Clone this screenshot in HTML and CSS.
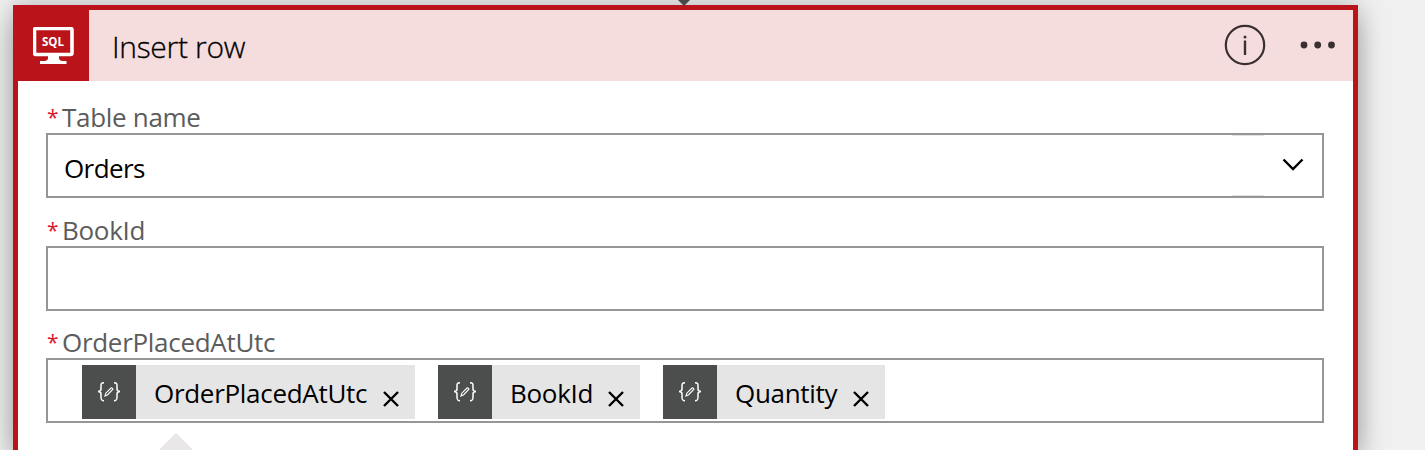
FILE: index.html
```
<!DOCTYPE html>
<html lang="en">
<head>
<meta charset="utf-8">
<title>Insert row</title>
<link rel="stylesheet" href="styles.css">
</head>
<body>
<svg class="connector" width="16" height="6" viewBox="0 0 16 6"><path d="M2 0H14L8 6Z" fill="#484848"/></svg>
<main class="card">
  <header class="card-header">
    <div class="brand">
      <svg width="42" height="40" viewBox="0 0 42 40">
        <rect x="1.500" y="1.500" width="37.500" height="26" rx="1.500" fill="none" stroke="#fff" stroke-width="3.600"/>
        <path d="M15 29H26V31Q26 34 30 34H33.500V37H7V34H11Q15 34 15 31Z" fill="#fff"/>
        <text x="9" y="18.800" class="brand-text" textLength="22" lengthAdjust="spacingAndGlyphs">SQL</text>
      </svg>
    </div>
    <h1 class="title">Insert row</h1>
    <svg class="info" width="42" height="42" viewBox="0 0 42 42"><circle cx="21" cy="21" r="19.200" fill="none" stroke="#3a3031" stroke-width="2.200"/><path d="M21 16.500V31" stroke="#3a3031" stroke-width="2.400"/><circle cx="21" cy="13" r="1.500" fill="#3a3031"/></svg>
    <svg class="more" width="36" height="8" viewBox="0 0 36 8" fill="#3a3031"><circle cx="4" cy="4" r="3.400"/><circle cx="17.700" cy="4" r="3.400"/><circle cx="31.500" cy="4" r="3.400"/></svg>
  </header>
  <section class="fields">
    <div class="field">
      <div class="label"><span class="star">*</span><span>Table name</span></div>
      <div class="box select"><span class="select-value">Orders</span>
        <span class="select-edge"></span>
        <svg class="chevron" width="22" height="14" viewBox="0 0 22 14"><path d="M1.500 1.500L11 11L20.500 1.500" fill="none" stroke="#000" stroke-width="2.400"/></svg>
      </div>
    </div>
    <div class="field">
      <div class="label"><span class="star">*</span><span>BookId</span></div>
      <div class="box"></div>
    </div>
    <div class="field">
      <div class="label"><span class="star">*</span><span>OrderPlacedAtUtc</span></div>
      <div class="box tokens">
        <div class="token token-order"><span class="token-icon"><svg width="24" height="20" viewBox="0 0 24 20"><g fill="none" stroke="#fff" stroke-width="1.500"><path d="M7 .8C4 .8 4 2 4 4V7Q4 9.500 1 9.500Q4 9.500 4 12V15C4 18 4.500 18.700 7 18.700M17 .8C20 .8 20 2 20 4V7Q20 9.500 23 9.500Q20 9.500 20 12V15C20 18 19.500 18.700 17 18.700"/><path stroke-width="1.100" d="M8 14L8.800 11.200L14 6Q15.200 5.500 16 7.200L10.700 12.700Z"/></g></svg></span><span class="token-name">OrderPlacedAtUtc</span><svg class="close" width="16" height="16" viewBox="0 0 16 16"><path d="M1 1L15 15M15 1L1 15"/></svg></div>
        <div class="token token-book"><span class="token-icon"><svg width="24" height="20" viewBox="0 0 24 20"><g fill="none" stroke="#fff" stroke-width="1.500"><path d="M7 .8C4 .8 4 2 4 4V7Q4 9.500 1 9.500Q4 9.500 4 12V15C4 18 4.500 18.700 7 18.700M17 .8C20 .8 20 2 20 4V7Q20 9.500 23 9.500Q20 9.500 20 12V15C20 18 19.500 18.700 17 18.700"/><path stroke-width="1.100" d="M8 14L8.800 11.200L14 6Q15.200 5.500 16 7.200L10.700 12.700Z"/></g></svg></span><span class="token-name">BookId</span><svg class="close" width="16" height="16" viewBox="0 0 16 16"><path d="M1 1L15 15M15 1L1 15"/></svg></div>
        <div class="token token-quantity"><span class="token-icon"><svg width="24" height="20" viewBox="0 0 24 20"><g fill="none" stroke="#fff" stroke-width="1.500"><path d="M7 .8C4 .8 4 2 4 4V7Q4 9.500 1 9.500Q4 9.500 4 12V15C4 18 4.500 18.700 7 18.700M17 .8C20 .8 20 2 20 4V7Q20 9.500 23 9.500Q20 9.500 20 12V15C20 18 19.500 18.700 17 18.700"/><path stroke-width="1.100" d="M8 14L8.800 11.200L14 6Q15.200 5.500 16 7.200L10.700 12.700Z"/></g></svg></span><span class="token-name">Quantity</span><svg class="close" width="16" height="16" viewBox="0 0 16 16"><path d="M1 1L15 15M15 1L1 15"/></svg></div>
      </div>
    </div>
    <svg class="callout" width="36" height="17" viewBox="0 0 36 17"><path d="M1 17L18 0L35 17Z" fill="#e8e6e7"/></svg>
  </section>
</main>
</body>
</html>
```
FILE: styles.css
```
* { box-sizing: border-box; }
body { margin: 0; padding: 5px 67px 0 13px; width: 1425px; height: 450px; overflow: hidden; background: #f1f0f0; font-family: "Open Sans", "Noto Sans", sans-serif; color: #000; }
svg { display: block; flex: none; }
.connector { position: absolute; left: 676px; top: 0; z-index: 1; }
.card { width: 1345px; height: 445px; border: 5px solid #ba141a; border-bottom: 0; background: #fff; box-shadow: 0 0 25px rgba(0,0,0,.25), 0 20px 25px rgba(0,0,0,.17); }
.card-header { display: flex; height: 71px; align-items: center; background: #f5dcdd; }
.brand { width: 71px; height: 71px; padding: 17px 0 0 15px; background: #ba141a; }
.brand-text { font-size: 12.5px; font-weight: 700; fill: #fff; }
.title { flex: 1; margin: 3px 0 0 23px; font-size: 30px; font-weight: 300; line-height: 40px; letter-spacing: -.3px; -webkit-text-stroke: .3px #000; white-space: nowrap; }
.info { margin: -1px 34px 0 0; }
.more { margin: -2px 17px 0 0; }
.fields { padding: 20px 29px 0 28px; }
.field { height: 113px; }
.field:nth-child(2) { height: 112px; }
.field:nth-child(3) { height: 97px; }
.label { display: flex; height: 32px; color: #5c5c5c; font-size: 26px; line-height: 32px; letter-spacing: -.3px; white-space: nowrap; }
.star { width: 16px; padding-left: 1px; color: #d8172c; font-size: 21px; line-height: 32px; }
.box { height: 65px; border: 2px solid #969696; background: #fff; }
.select { display: flex; align-items: center; padding: 0 18px 0 16px; font-size: 26px; letter-spacing: -.6px; }
.select-value { flex: 1; padding-top: 4px; }
.select-edge { width: 32px; height: 61px; margin-right: 18px; border: solid #e2e2e2; border-width: 1px 0; }
.chevron { margin-top: -2px; }
.tokens { display: flex; gap: 23px; padding: 5px 0 0 34px; }
.token { display: flex; height: 54px; align-items: center; background: #e5e5e5; }
.token-order { width: 333px; }
.token-book { width: 202px; }
.token-quantity { width: 222px; }
.token-icon { display: flex; width: 54px; height: 54px; align-items: center; justify-content: center; background: #4c4e4d; }
.token-name { flex: 1; padding: 1px 0 0 18px; font-size: 26px; letter-spacing: -.3px; white-space: nowrap; }
.close { margin: 13px 16px 0 0; fill: none; stroke: #000; stroke-width: 2.4; }
.callout { margin: 10px 0 0 112px; }
```
